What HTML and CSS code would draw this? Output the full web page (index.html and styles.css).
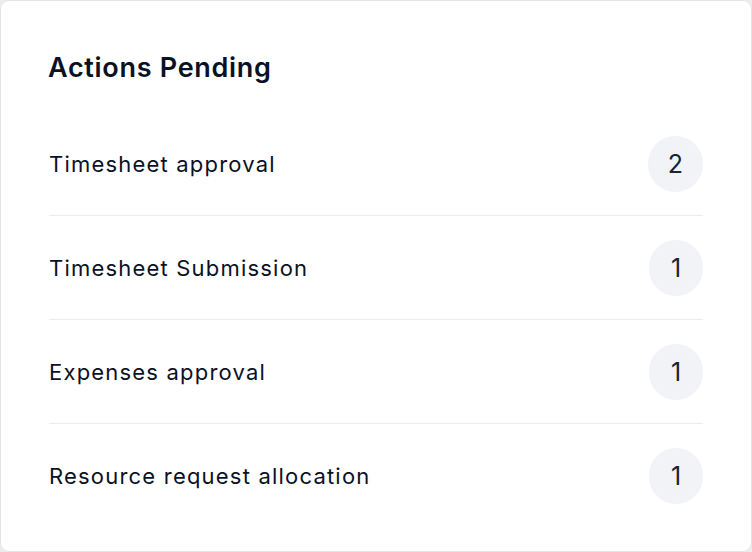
FILE: index.html
```html
<!DOCTYPE html>
<html lang="en">
<head>
  <meta charset="UTF-8">
  <meta name="viewport" content="width=device-width, initial-scale=1.0">
  <title>Actions Pending</title>
  <link rel="stylesheet" href="styles.css">
</head>
<body>
  <div class="card">
    <h2 class="card-title">Actions Pending</h2>
    <ul class="actions">
      <li class="action"><span class="action-name">Timesheet approval</span><span class="count">2</span></li>
      <li class="action"><span class="action-name">Timesheet Submission</span><span class="count">1</span></li>
      <li class="action"><span class="action-name">Expenses approval</span><span class="count">1</span></li>
      <li class="action"><span class="action-name">Resource request allocation</span><span class="count">1</span></li>
    </ul>
  </div>
</body>
</html>
```

FILE: styles.css
```css
body { margin: 0; background: #ececee; font-family: Inter, "Noto Sans", Arial, sans-serif; color: #0b1124; }
.card { box-sizing: border-box; width: 752px; height: 552px; background: #fff; border: 1.5px solid #e4e4e7; border-radius: 9px; padding: 48px 48px 0 47px; }
.card-title { margin: 0 0 25px; font-size: 27px; line-height: 38px; font-weight: 600; letter-spacing: 0.7px; }
.actions { list-style: none; margin: 0; padding: 0 0 0 1px; }
.action { display: flex; align-items: center; justify-content: space-between; padding: 23.5px 0; border-bottom: 1px solid #ececef; }
.action:last-child { border-bottom: none; }
.action-name { font-size: 22px; font-weight: 420; letter-spacing: 1.2px; }
.count { box-sizing: border-box; display: flex; align-items: center; justify-content: center; min-width: 54px; height: 56px; padding: 0 20px; border-radius: 28px; background: #f1f3f6; font-size: 25px; font-weight: 400; color: #1c2333; }
```
